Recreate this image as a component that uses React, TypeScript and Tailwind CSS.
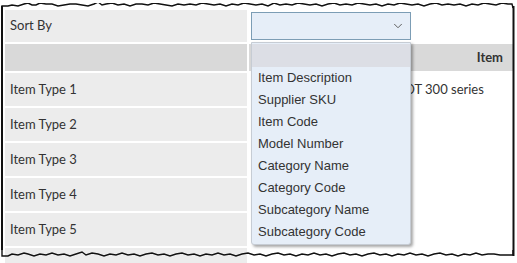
import { ChevronDown } from "lucide-react";

const ITEM_TYPES = ["Item Type 1", "Item Type 2", "Item Type 3", "Item Type 4", "Item Type 5"];

const SORT_OPTIONS = [
  "",
  "Item Description",
  "Supplier SKU",
  "Item Code",
  "Model Number",
  "Category Name",
  "Category Code",
  "Subcategory Name",
  "Subcategory Code",
];

// torn paper edges of the screenshot frame
const TOP_EDGE =
  "M2 9 L2 6 L8 6 L12 5 L18 6 L24 4 L28 3 L32 5 L36 5 L40 3 L46 4 L52 4 L58 6 L64 5 L70 4 L76 4 L82 5 L88 6 L94 4 L98 2 L102 5 L106 4 L112 3 L118 5 L124 4 L130 6 L136 4 L142 4 L148 5 L154 3 L160 4 L166 5 L172 6 L178 4 L184 5 L190 4 L196 5 L202 3 L208 4 L214 5 L220 4 L226 6 L232 4 L238 5 L244 3 L250 4 L256 5 L262 4 L268 6 L274 3 L280 5 L286 4 L292 5 L298 3 L304 4 L310 5 L316 4 L322 6 L328 4 L334 3 L340 5 L346 4 L352 5 L358 3 L364 4 L370 5 L376 4 L382 6 L388 4 L394 5 L400 3 L406 4 L412 5 L418 4 L424 6 L430 4 L436 3 L442 5 L448 4 L454 5 L460 4 L466 6 L472 4 L478 5 L484 3 L490 4 L496 5 L502 3 L508 4 L512 4 L513 8";

const BOTTOM_EDGE =
  "M2 248 L2 256 L8 256 L12 254 L18 255 L24 253 L28 254 L34 256 L40 254 L46 255 L52 253 L58 255 L64 254 L70 256 L76 254 L82 252 L86 255 L92 253 L98 254 L104 256 L110 254 L116 255 L122 253 L128 255 L134 254 L140 256 L146 254 L152 253 L158 255 L164 254 L170 256 L176 254 L182 253 L188 255 L194 254 L200 256 L206 254 L212 255 L218 253 L224 255 L230 254 L236 256 L242 254 L248 253 L254 255 L260 254 L266 256 L272 254 L278 253 L284 255 L290 254 L296 256 L302 254 L308 255 L314 253 L320 255 L326 254 L332 256 L338 254 L344 253 L350 255 L356 254 L362 256 L368 254 L374 253 L380 255 L386 254 L392 256 L398 254 L404 255 L410 253 L416 255 L422 254 L428 256 L434 254 L440 253 L446 255 L452 254 L458 256 L464 254 L470 255 L476 253 L482 255 L488 254 L494 254 L500 255 L506 255 L513 255 L513 250";

export default function App() {
  return (
    <div className="relative h-[263px] w-[517px] overflow-hidden bg-white text-[#333]">
      {/* frame */}
      <svg className="pointer-events-none absolute inset-0 z-20" width="517" height="263">
        <path d={TOP_EDGE} fill="none" stroke="#111" strokeWidth="1.4" />
        <path d={BOTTOM_EDGE} fill="none" stroke="#111" strokeWidth="1.4" />
        <path d="M2 6 L2 250" stroke="#111" strokeWidth="2" />
        <path d="M513.5 6 L513.5 256" stroke="#111" strokeWidth="2" />
        <rect x="0" y="0" width="517" height="3" fill="white" />
      </svg>

      <div className="flex flex-col gap-[2px] pl-[5px] pt-[10px] font-['Lato',sans-serif] text-[13px]">
        {/* sort row */}
        <div className="flex h-[32px] gap-[2px]">
          <div className="flex w-[242px] items-center bg-[#ececec] px-[5px]">Sort By</div>
          <div className="flex flex-1 items-center">
            <div className="ml-[2px] flex h-[28px] w-[160px] items-center justify-end border border-[#7c9db5] bg-[#e6eef8] pr-[5px]">
              <ChevronDown className="h-[14px] w-[14px] text-[#555]" strokeWidth={1.6} />
            </div>
          </div>
        </div>

        {/* header row */}
        <div className="flex h-[27px] gap-[2px]">
          <div className="w-[242px] bg-[#d9d9d9]" />
          <div className="flex w-[264px] items-center justify-end bg-[#d9d9d9] pr-[10px] font-bold">Item</div>
        </div>

        {ITEM_TYPES.map((t, i) => (
          <div key={t} className="flex h-[33px] gap-[2px]">
            <div className="flex w-[242px] items-center bg-[#ececec] px-[5px]">{t}</div>
            <div className="flex flex-1 items-center pl-[156px]">{i === 0 ? "DT 300 series" : ""}</div>
          </div>
        ))}
        <div className="flex h-[33px] gap-[2px]">
          <div className="w-[242px] bg-[#ececec]" />
        </div>
      </div>

      {/* open dropdown */}
      <div className="absolute left-[251px] top-[42px] z-10 w-[160px] rounded-b-[3px] border border-[#c6ccd4] bg-[#e6eef8] py-[1px] font-['Liberation_Sans',Arial,sans-serif] text-[13px] text-[#333] shadow-[2px_2px_3px_rgba(0,0,0,0.35)]">
        {SORT_OPTIONS.map((o, i) => (
          <div
            key={i}
            className={`flex h-[22px] items-center px-[6px] ${i === 0 ? "h-[23px] bg-[#dcdee5]" : ""}`}
          >
            {o}
          </div>
        ))}
      </div>
    </div>
  );
}
